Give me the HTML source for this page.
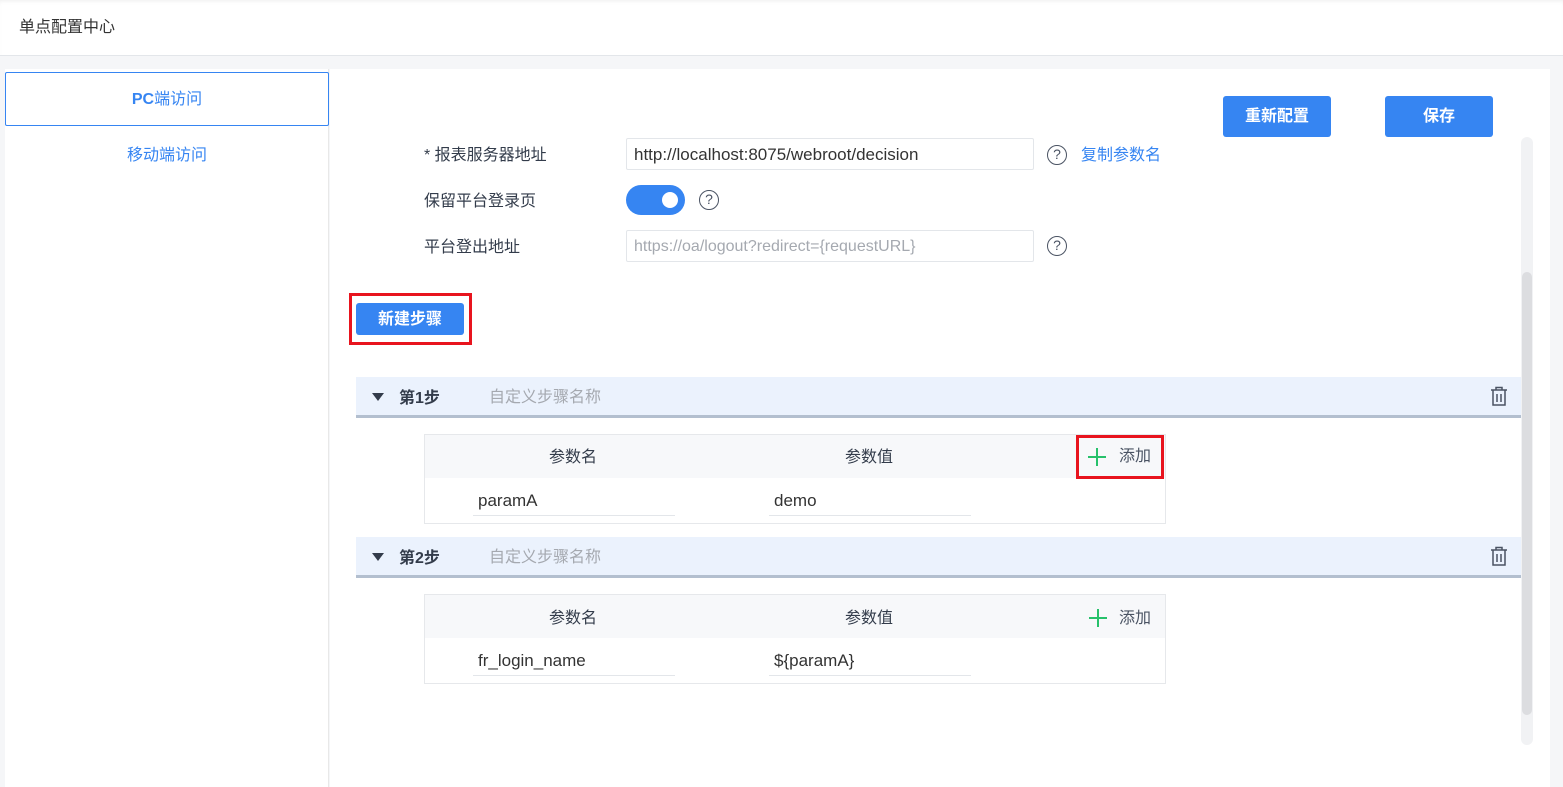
<!DOCTYPE html>
<html><head><meta charset="utf-8"><style>
*{margin:0;padding:0;box-sizing:border-box}
body{width:1563px;height:787px;background:#f5f6f8;font-family:"Liberation Sans","Noto Sans CJK SC",sans-serif;color:#333;position:relative;overflow:hidden;font-size:16px}
.a{position:absolute}
.lbl{color:#333c4b;font-size:16px;line-height:20px}
.inp{position:absolute;border:1px solid #e3e6ea;border-radius:2px;background:#fff;height:32px;line-height:32px;padding-left:7px;font-size:17px}
.q{position:absolute;width:20px;height:20px;border:1.5px solid #4a5363;border-radius:50%;text-align:center;line-height:17px;font-size:14px;color:#4a5363}
.btn{position:absolute;background:#3685f2;color:#fff;border-radius:3px;text-align:center;font-weight:bold;font-size:16px}
.step{position:absolute;left:356px;width:1165px;height:41px;background:#ebf2fd;border-bottom:3px solid #b3bfcf}
.tbl{position:absolute;left:424px;width:742px;height:90px;border:1px solid #e6e8eb;background:#fff}
.th{position:absolute;left:0;top:0;width:740px;height:43px;background:#f7f8fa}
.u{position:absolute;border-bottom:1px solid #e3e6ea;height:37px;line-height:44px;font-size:17px;padding-left:5px;width:202px;color:#333}
.tri{position:absolute;width:0;height:0;border-left:6px solid transparent;border-right:6px solid transparent;border-top:8px solid #333c4b}
</style></head><body>
<div class="a" style="left:0;top:0;width:1563px;height:56px;background:#fff;border-bottom:1px solid #e3e6ea;box-shadow:inset 0 3px 4px -2px #eee"></div>
<div class="a" style="left:19px;top:18px;font-size:16px;color:#333;line-height:20px">单点配置中心</div>
<div class="a" style="left:5px;top:69px;width:324px;height:718px;background:#fff;border-right:1px solid #e8e8e8"></div>
<div class="a" style="left:5px;top:72px;width:324px;height:54px;border:1px solid #3685f2;border-radius:2px;text-align:center;line-height:54px;color:#3685f2;font-weight:bold;font-size:16px">PC<span style="font-weight:normal">端访问</span></div>
<div class="a" style="left:5px;top:146px;width:324px;text-align:center;color:#3685f2;font-size:16px;line-height:20px">移动端访问</div>
<div class="a" style="left:330px;top:69px;width:1220px;height:718px;background:#fff"></div>
<div class="btn" style="left:1223px;top:96px;width:108px;height:41px;line-height:41px">重新配置</div>
<div class="btn" style="left:1385px;top:96px;width:108px;height:41px;line-height:41px">保存</div>
<div class="a" style="left:1521px;top:137px;width:12px;height:608px;background:#f1f2f4;border-radius:6px"></div>
<div class="a" style="left:1522px;top:272px;width:10px;height:443px;background:#dcdde0;border-radius:5px"></div>
<div class="a lbl" style="left:424px;top:146px">* 报表服务器地址</div>
<div class="inp" style="left:626px;top:138px;width:408px;color:#333">http://localhost:8075/webroot/decision</div>
<div class="q" style="left:1047px;top:145px">?</div>
<div class="a" style="left:1081px;top:146px;color:#3685f2;font-size:16px;line-height:20px">复制参数名</div>
<div class="a lbl" style="left:424px;top:192px">保留平台登录页</div>
<div class="a" style="left:626px;top:185px;width:59px;height:30px;background:#3685f2;border-radius:15px"><div class="a" style="left:36px;top:7px;width:16px;height:16px;background:#fff;border-radius:50%"></div></div>
<div class="q" style="left:699px;top:190px">?</div>
<div class="a lbl" style="left:424px;top:238px">平台登出地址</div>
<div class="inp" style="left:626px;top:230px;width:408px;color:#a5a9b0;font-size:16px">https://oa/logout?redirect={requestURL}</div>
<div class="q" style="left:1047px;top:236px">?</div>
<div class="a" style="left:349px;top:293px;width:123px;height:52px;border:3px solid #e8141e"></div>
<div class="btn" style="left:356px;top:303px;width:108px;height:32px;line-height:34px">新建步骤</div>

<div class="step" style="top:377px"></div>
<div class="tri" style="left:372px;top:393px"></div>
<div class="a" style="left:399px;top:389px;font-weight:bold;color:#333c4b;line-height:20px">第1步</div>
<div class="a" style="left:489px;top:388px;color:#a5a9b0;font-size:16px;line-height:20px">自定义步骤名称</div>
<svg class="a" style="left:1490px;top:386px" width="18" height="20" viewBox="0 0 18 20" fill="none" stroke="#4a5363" stroke-width="1.5"><path d="M1 4h16M6 4V1.5h6V4M3 4v15h12V4M7 8v8M11 8v8"/></svg>
<div class="tbl" style="top:434px"><div class="th"></div>
<div class="a" style="left:124px;top:13px;color:#333c4b;line-height:20px">参数名</div>
<div class="a" style="left:420px;top:13px;color:#333c4b;line-height:20px">参数值</div>
<div class="u" style="left:48px;top:44px">paramA</div>
<div class="u" style="left:344px;top:44px">demo</div>
</div>
<div class="a" style="left:1076px;top:435px;width:88px;height:44px;border:3px solid #e8141e"></div>
<svg class="a" style="left:1088px;top:448px" width="18" height="18" viewBox="0 0 18 18" stroke="#27c16b" stroke-width="2"><path d="M9 0v18M0 9h18"/></svg>
<div class="a" style="left:1119px;top:447px;color:#4a5363;line-height:20px">添加</div>

<div class="step" style="top:537px"></div>
<div class="tri" style="left:372px;top:553px"></div>
<div class="a" style="left:399px;top:549px;font-weight:bold;color:#333c4b;line-height:20px">第2步</div>
<div class="a" style="left:489px;top:548px;color:#a5a9b0;font-size:16px;line-height:20px">自定义步骤名称</div>
<svg class="a" style="left:1490px;top:546px" width="18" height="20" viewBox="0 0 18 20" fill="none" stroke="#4a5363" stroke-width="1.5"><path d="M1 4h16M6 4V1.5h6V4M3 4v15h12V4M7 8v8M11 8v8"/></svg>
<div class="tbl" style="top:594px"><div class="th"></div>
<div class="a" style="left:124px;top:14px;color:#333c4b;line-height:20px">参数名</div>
<div class="a" style="left:420px;top:14px;color:#333c4b;line-height:20px">参数值</div>
<svg class="a" style="left:664px;top:14px" width="18" height="18" viewBox="0 0 18 18" stroke="#27c16b" stroke-width="2"><path d="M9 0v18M0 9h18"/></svg>
<div class="a" style="left:694px;top:14px;color:#4a5363;line-height:20px">添加</div>
<div class="u" style="left:48px;top:44px">fr_login_name</div>
<div class="u" style="left:344px;top:44px">${paramA}</div>
</div>
</body></html>
